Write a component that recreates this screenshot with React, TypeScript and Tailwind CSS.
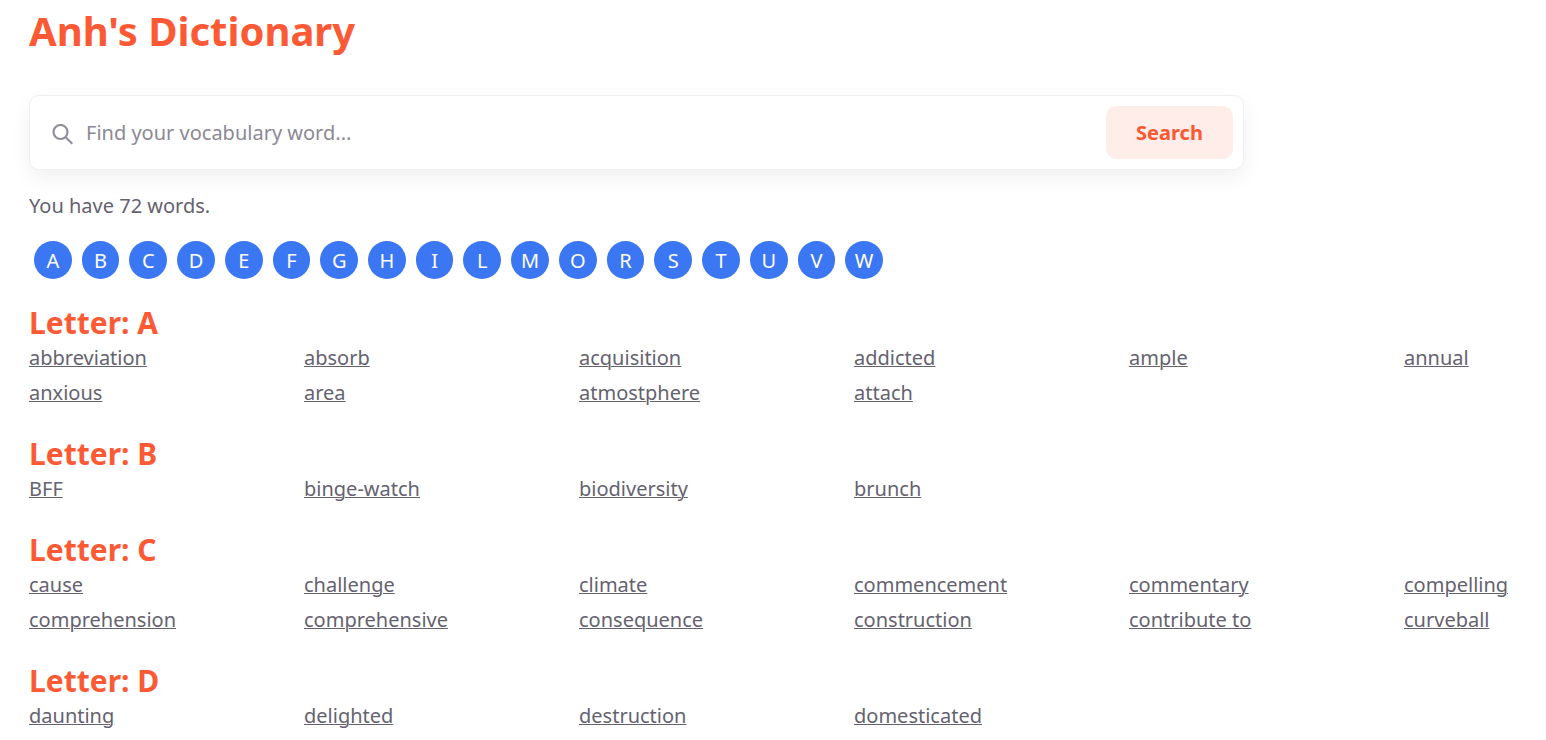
import React from "react";

const letters = ["A", "B", "C", "D", "E", "F", "G", "H", "I", "L", "M", "O", "R", "S", "T", "U", "V", "W"];

const groups = [
  { letter: "A", words: ["abbreviation", "absorb", "acquisition", "addicted", "ample", "annual", "anxious", "area", "atmostphere", "attach"] },
  { letter: "B", words: ["BFF", "binge-watch", "biodiversity", "brunch"] },
  { letter: "C", words: ["cause", "challenge", "climate", "commencement", "commentary", "compelling", "comprehension", "comprehensive", "consequence", "construction", "contribute to", "curveball"] },
  { letter: "D", words: ["daunting", "delighted", "destruction", "domesticated"] },
];

function SearchBar() {
  return (
    <form
      onSubmit={(e) => e.preventDefault()}
      className="mt-[39px] flex w-full max-w-[1215px] items-center rounded-[10px] border border-[#f0eff2] bg-white p-[10px] shadow-[0_8px_20px_rgba(0,0,0,0.06)]"
    >
      <svg className="mt-1 ml-3 size-[21px] shrink-0 text-[#918f9b]" viewBox="0 0 21 21" fill="none" stroke="currentColor" strokeWidth="2.2" aria-hidden="true">
        <circle cx="8.5" cy="8" r="7" />
        <path d="M13.4 13 L20.3 19.8" />
      </svg>
      <input
        type="text"
        aria-label="Find your vocabulary word"
        placeholder="Find your vocabulary word..."
        className="ml-[13px] min-w-0 flex-1 bg-transparent text-xl outline-none placeholder:text-[#8b8994]"
      />
      <button type="submit" className="h-[53px] w-[127px] rounded-[10px] bg-[#ffedea] text-xl font-bold text-[#fa5832]">
        Search
      </button>
    </form>
  );
}

export default function App() {
  return (
    <main className="overflow-hidden bg-white pt-[5px] pl-[29px] font-['Noto_Sans',sans-serif] text-xl text-[#65626f]">
      <h1 className="text-[40px] leading-[51px] font-bold text-[#fc5a35]">Anh's Dictionary</h1>
      <SearchBar />
      <p className="mt-5 leading-8">You have 72 words.</p>
      <nav className="mt-[19px] mb-px ml-[5px] grid max-w-[849px] grid-cols-[repeat(18,minmax(0,1fr))] gap-[10px]">
        {letters.map((l) => (
          <a key={l} href={`#${l}`} className="flex aspect-square items-center justify-center rounded-full bg-[#3c77f3] pt-0.5 text-white">
            {l}
          </a>
        ))}
      </nav>
      {groups.map((g) => (
        <section key={g.letter} id={g.letter} className="mt-[27px]">
          <h2 className="text-[30px] leading-[34px] font-bold text-[#fc5a35]">Letter: {g.letter}</h2>
          <ul className="grid grid-cols-2 leading-[35px] md:grid-cols-4 xl:grid-cols-6 xl:gap-x-[133px]">
            {g.words.map((w) => (
              <li key={w} className="whitespace-nowrap">
                <a href={`#${w}`} className="underline decoration-1">{w}</a>
              </li>
            ))}
          </ul>
        </section>
      ))}
    </main>
  );
}
